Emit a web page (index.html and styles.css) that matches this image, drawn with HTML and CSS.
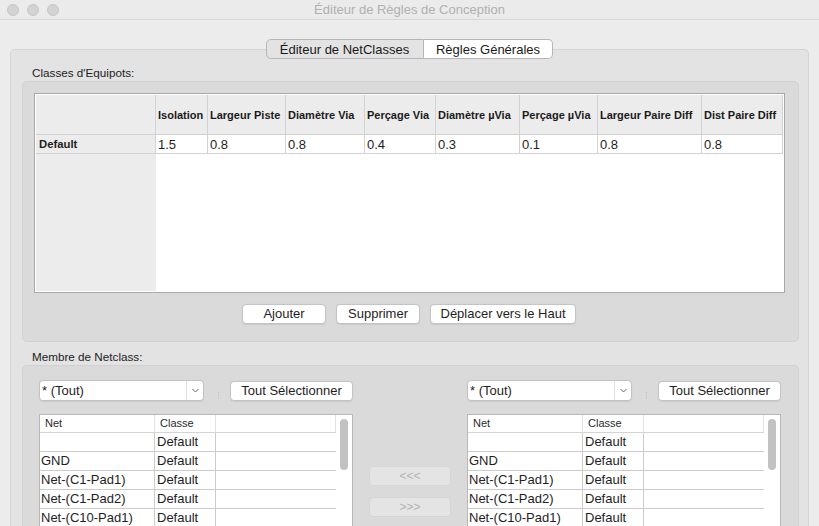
FILE: index.html
```html
<!DOCTYPE html>
<html lang="fr">
<head>
<meta charset="utf-8">
<title>Éditeur de Règles de Conception</title>
<link rel="stylesheet" href="styles.css">
</head>
<body>
<div class="window">
  <div class="titlebar">
    <div class="lights"><span class="light"></span><span class="light"></span><span class="light"></span></div>
    <div class="title">Éditeur de Règles de Conception</div>
    <div></div>
  </div>
  <div class="content">
    <div class="tabs">
      <div class="tab tab-active">Éditeur de NetClasses</div>
      <div class="tab tab-plain">Règles Générales</div>
    </div>
    <div class="panel">
      <div class="label">Classes d'Equipots:</div>
      <div class="group group-classes">
        <div class="grid">
          <div class="hcell corner"></div>
          <div class="hcell">Isolation</div>
          <div class="hcell">Largeur Piste</div>
          <div class="hcell">Diamètre Via</div>
          <div class="hcell">Perçage Via</div>
          <div class="hcell">Diamètre µVia</div>
          <div class="hcell">Perçage µVia</div>
          <div class="hcell">Largeur Paire Diff</div>
          <div class="hcell">Dist Paire Diff</div>
          <div class="rowhead">Default</div>
          <div class="dcell">1.5</div>
          <div class="dcell">0.8</div>
          <div class="dcell">0.8</div>
          <div class="dcell">0.4</div>
          <div class="dcell">0.3</div>
          <div class="dcell">0.1</div>
          <div class="dcell">0.8</div>
          <div class="dcell">0.8</div>
          <div class="rowfill"></div>
        </div>
        <div class="buttons">
          <button class="btn btn-84">Ajouter</button>
          <button class="btn btn-84">Supprimer</button>
          <button class="btn btn-146">Déplacer vers le Haut</button>
        </div>
      </div>
      <div class="label label-members">Membre de Netclass:</div>
      <div class="group group-members">
        <div class="members">
          <div class="toolbar">
            <div class="combo"><span class="combo-text">* (Tout)</span><span class="combo-arrow"><svg width="7" height="5" viewBox="0 0 7 5"><path d="M0.5 1 L3.5 4 L6.5 1" fill="none" stroke="#6a6a6a" stroke-width="1"/></svg></span></div>
            <span class="tick"></span>
            <button class="btn btn-select">Tout Sélectionner</button>
          </div>
          <div></div>
          <div class="toolbar">
            <div class="combo"><span class="combo-text">* (Tout)</span><span class="combo-arrow"><svg width="7" height="5" viewBox="0 0 7 5"><path d="M0.5 1 L3.5 4 L6.5 1" fill="none" stroke="#6a6a6a" stroke-width="1"/></svg></span></div>
            <span class="tick"></span>
            <button class="btn btn-select">Tout Sélectionner</button>
          </div>

          <div class="list">
            <div class="list-table">
              <div class="lh c1">Net</div><div class="lh c2">Classe</div><div class="lh c3"></div>
              <div class="lc c1"></div><div class="lc c2">Default</div><div class="lc c3"></div>
              <div class="lc c1">GND</div><div class="lc c2">Default</div><div class="lc c3"></div>
              <div class="lc c1">Net-(C1-Pad1)</div><div class="lc c2">Default</div><div class="lc c3"></div>
              <div class="lc c1">Net-(C1-Pad2)</div><div class="lc c2">Default</div><div class="lc c3"></div>
              <div class="lc c1">Net-(C10-Pad1)</div><div class="lc c2">Default</div><div class="lc c3"></div>
            </div>
            <div class="scroll"><div class="thumb"></div></div>
          </div>

          <div class="arrows">
            <button class="btn-dis">&lt;&lt;&lt;</button>
            <button class="btn-dis">&gt;&gt;&gt;</button>
          </div>

          <div class="list">
            <div class="list-table">
              <div class="lh c1">Net</div><div class="lh c2">Classe</div><div class="lh c3"></div>
              <div class="lc c1"></div><div class="lc c2">Default</div><div class="lc c3"></div>
              <div class="lc c1">GND</div><div class="lc c2">Default</div><div class="lc c3"></div>
              <div class="lc c1">Net-(C1-Pad1)</div><div class="lc c2">Default</div><div class="lc c3"></div>
              <div class="lc c1">Net-(C1-Pad2)</div><div class="lc c2">Default</div><div class="lc c3"></div>
              <div class="lc c1">Net-(C10-Pad1)</div><div class="lc c2">Default</div><div class="lc c3"></div>
            </div>
            <div class="scroll"><div class="thumb"></div></div>
          </div>
        </div>
      </div>
    </div>
  </div>
</div>
</body>
</html>
```

FILE: styles.css
```css
* { box-sizing: border-box; }

html, body {
  margin: 0;
  padding: 0;
}

body {
  width: 819px;
  height: 526px;
  overflow: hidden;
  background: #ececec;
  font-family: "Liberation Sans", Arial, sans-serif;
  color: #1e1e1e;
}

.window {
  width: 819px;
  height: 526px;
  display: flex;
  flex-direction: column;
  overflow: hidden;
}

/* Title bar */
.titlebar {
  height: 20px;
  flex: none;
  display: grid;
  grid-template-columns: 1fr auto 1fr;
  align-items: center;
  background: #ebebeb;
  border-bottom: 1px solid #d6d6d6;
}

.lights {
  display: flex;
  gap: 8px;
  padding-left: 7px;
}

.light {
  width: 12px;
  height: 12px;
  border-radius: 50%;
  background: #d3d3d3;
  border: 1px solid #c6c6c6;
}

.title {
  font-size: 13px;
  line-height: 19px;
  color: #b0b0b0;
}

/* Content */
.content {
  flex: 1;
  min-height: 0;
  display: flex;
  flex-direction: column;
}

.tabs {
  margin-top: 19px;
  margin-bottom: -10px;
  display: flex;
  justify-content: center;
  position: relative;
  z-index: 1;
  flex: none;
}

.tab {
  height: 20px;
  font-size: 13px;
  line-height: 19px;
  border: 1px solid #b6b6b6;
  text-align: center;
  color: #1a1a1a;
}

.tab-active {
  width: 158px;
  background: #e3e3e3;
  border-radius: 5px 0 0 5px;
  padding-right: 1px;
}

.tab-plain {
  width: 129px;
  background: #ffffff;
  border-left: none;
  border-radius: 0 5px 5px 0;
}

.panel {
  flex: 1;
  min-height: 0;
  overflow: hidden;
  display: flex;
  flex-direction: column;
  margin: 0 10px;
  background: #e3e3e3;
  border: 1px solid #d5d5d5;
  border-bottom: none;
  border-radius: 5px 5px 0 0;
  padding: 16px 9px 0 11px;
}

.label {
  flex: none;
  font-size: 11.7px;
  line-height: 14px;
  padding-left: 10px;
  margin-bottom: 1px;
  color: #222222;
}

.label-members {
  margin-top: 8px;
}

.group {
  background: #dadada;
  border: 1px solid #d1d1d1;
  border-radius: 5px;
}

.group-classes {
  flex: none;
  padding: 11px 14px 17px 11px;
}

/* Net classes grid */
.grid {
  display: grid;
  width: 751px;
  height: 200px;
  grid-template-columns: 120px 52px 78px 79px 71px 84px 78px 104px 81px;
  grid-template-rows: 40px 19px 1fr;
  border: 1px solid #a8a8a8;
  padding: 1px;
  background: #ffffff;
}

.hcell {
  background: #ececec;
  border-right: 1px solid #d2d2d2;
  border-bottom: 1px solid #d2d2d2;
  font-size: 11px;
  font-weight: bold;
  display: flex;
  align-items: center;
  padding-left: 2px;
  padding-top: 1px;
  white-space: nowrap;
  overflow: hidden;
  color: #1a1a1a;
}

.rowhead {
  background: #ececec;
  border-right: 1px solid #d2d2d2;
  border-bottom: 1px solid #d2d2d2;
  font-size: 11.3px;
  font-weight: bold;
  line-height: 19px;
  padding-left: 3px;
}

.dcell {
  background: #ffffff;
  border-right: 1px solid #d2d2d2;
  border-bottom: 1px solid #d2d2d2;
  font-size: 13px;
  line-height: 19px;
  padding-left: 2px;
}

.rowfill {
  background: #ececec;
}

.buttons {
  margin-top: 11px;
  display: flex;
  justify-content: center;
  gap: 10px;
}

.btn {
  height: 20px;
  padding: 0;
  font-family: inherit;
  font-size: 13px;
  line-height: 18px;
  color: #1e1e1e;
  background: #ffffff;
  border: 1px solid #c4c4c4;
  border-radius: 4px;
  box-shadow: 0 0.5px 1px rgba(0, 0, 0, 0.08);
}

.btn-84 { width: 84px; }
.btn-146 { width: 146px; }
.btn-select { width: 123px; margin-left: 11px; }

/* Members */
.group-members {
  flex: 1;
  min-height: 0;
  overflow: hidden;
  border-bottom: none;
  border-radius: 5px 5px 0 0;
  padding: 14px 18px 0 16px;
}

.members {
  display: grid;
  grid-template-columns: 314px 82px 314px;
  column-gap: 16px;
  row-gap: 13px;
}

.toolbar {
  display: flex;
  align-items: center;
  height: 21px;
}

.combo {
  width: 165px;
  height: 21px;
  display: flex;
  background: #ffffff;
  border: 1px solid #c3c3c3;
  border-radius: 4px;
  box-shadow: 0 0.5px 1px rgba(0, 0, 0, 0.08);
}

.combo-text {
  flex: 1;
  font-size: 13px;
  line-height: 19px;
  padding-left: 2px;
}

.combo-arrow {
  width: 17px;
  border-left: 1px solid #e0e0e0;
  display: flex;
  align-items: center;
  justify-content: center;
}

.tick {
  width: 1px;
  height: 7px;
  margin-left: 14px;
  margin-top: 9px;
  border-left: 1px dotted #bdbdbd;
}

.list {
  height: 130px;
  background: #ffffff;
  border: 1px solid #b8b8b8;
  display: flex;
}

.list-table {
  display: grid;
  grid-template-columns: 115px 61px 120px;
  grid-template-rows: 18px repeat(5, 19px);
  align-content: start;
}

.lh {
  font-size: 11px;
  line-height: 17px;
  padding-left: 5px;
  color: #2a2a2a;
  border-bottom: 1px solid #d4d4d4;
  border-right: 1px solid #e2e2e2;
}

.lc {
  font-size: 13px;
  line-height: 18px;
  border-bottom: 1px solid #cccccc;
  border-right: 1px solid #cccccc;
  white-space: nowrap;
}

.lc.c1 { padding-left: 1px; }
.lc.c2 { padding-left: 2px; }
.lc.c3 { border-right: none; }

.scroll {
  width: 16px;
  padding: 4px 0 0 4px;
}

.thumb {
  width: 8px;
  height: 51px;
  border-radius: 4px;
  background: #c2c2c2;
}

.arrows {
  padding-top: 52px;
  display: flex;
  flex-direction: column;
  gap: 11px;
}

.btn-dis {
  width: 82px;
  height: 20px;
  padding: 0;
  font-family: inherit;
  font-size: 12px;
  line-height: 18px;
  color: #b3b3b3;
  background: #e4e4e4;
  border: 1px solid #d5d5d5;
  border-radius: 4px;
}
```
